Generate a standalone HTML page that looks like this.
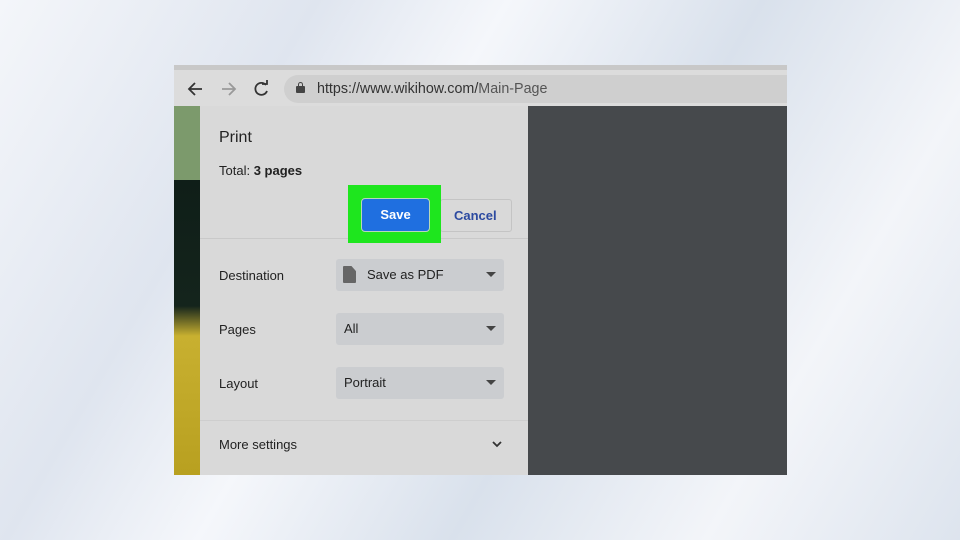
<!DOCTYPE html><html><head><style>
body{margin:0;width:960px;height:540px;overflow:hidden;font-family:"Liberation Sans",sans-serif;
background:linear-gradient(120deg,#f4f6fa 0%,#dfe5ef 25%,#f5f7fb 40%,#d9e1ec 60%,#f3f5f9 80%,#dde4ee 100%);position:relative}
.a{position:absolute}
.t{color:#222;font-size:13px}
.sel{position:absolute;left:336px;width:168px;height:32px;background:#cbcdd0;border-radius:3px}
.sel span{position:absolute;left:8px;top:8px;font-size:13px;color:#222}
.tri{position:absolute;right:8px;top:13px;width:0;height:0;border-left:5px solid transparent;border-right:5px solid transparent;border-top:5px solid #444}
</style></head><body>
<div class="a" style="left:174px;top:65px;width:613px;height:41px;background:#dcdcdc"></div>
<div class="a" style="left:174px;top:65px;width:613px;height:5px;background:#c8c8c8"></div>
<div class="a" style="left:284px;top:75px;width:503px;height:28px;background:#cfcfcf;border-radius:14px 0 0 14px"></div>
<svg class="a" style="left:186px;top:79px" width="90" height="20" viewBox="0 0 90 20" fill="none" stroke-width="1.8">
<path d="M16 10H3M9 4L3 10L9 16" stroke="#333"/>
<path d="M36 10H49M43 4L49 10L43 16" stroke="#999"/>
<path d="M80 6A6 6 0 1 0 81 12" stroke="#333"/><path d="M76 5h5v-4" stroke="#333"/>
</svg>
<div class="a" style="left:296px;top:86px;width:9px;height:7px;background:#444;border-radius:1px"></div>
<div class="a" style="left:298px;top:82px;width:3px;height:4px;border:1.5px solid #444;border-bottom:none;border-radius:3px 3px 0 0"></div>
<div class="a" style="left:317px;top:81px;font-size:14.3px;color:#333">https://www.wikihow.com/<span style="color:#555">Main-Page</span></div>
<div class="a" style="left:174px;top:106px;width:26px;height:369px;background:linear-gradient(#7c9a6c 0,#7c9a6c 74px,#0f1e18 74px,#14241c 200px,#c8b030 230px,#b8a020 369px)"></div>
<div class="a" style="left:200px;top:106px;width:328px;height:369px;background:#d9d9d9"></div>
<div class="a" style="left:528px;top:106px;width:259px;height:369px;background:#46494c"></div>
<div class="a" style="left:219px;top:129px;font-size:16px;color:#222">Print</div>
<div class="a t" style="left:219px;top:163px">Total: <b>3 pages</b></div>
<div class="a" style="left:200px;top:238px;width:328px;height:1px;background:#c9c9c9"></div>
<div class="a" style="left:200px;top:420px;width:328px;height:1px;background:#cecece"></div>
<div class="a" style="left:440px;top:199px;width:70px;height:31px;border:1px solid #c4c4c4;border-radius:3px"></div>
<div class="a" style="left:454px;top:208px;font-size:13px;font-weight:bold;color:#2c4aa0">Cancel</div>
<div class="a" style="left:348px;top:185px;width:93px;height:58px;background:#1ee61e"></div>
<div class="a" style="left:361px;top:198px;width:67px;height:32px;background:#1f6fe0;border:1px solid #b8d8b8;border-radius:4px;color:#fff;font-size:13px;font-weight:bold;text-align:center;line-height:32px">Save</div>
<div class="a t" style="left:219px;top:268px">Destination</div>
<div class="a t" style="left:219px;top:322px">Pages</div>
<div class="a t" style="left:219px;top:376px">Layout</div>
<div class="a t" style="left:219px;top:437px">More settings</div>
<svg class="a" style="left:491px;top:440px" width="12" height="8" viewBox="0 0 12 8"><path d="M2 2L6 6L10 2" stroke="#333" stroke-width="1.8" fill="none"/></svg>
<div class="sel" style="top:259px"><div class="a" style="left:7px;top:7px;width:13px;height:17px;background:#666;border-radius:1px;clip-path:polygon(0 0,65% 0,100% 30%,100% 100%,0 100%)"></div><span style="left:31px">Save as PDF</span><div class="tri"></div></div>
<div class="sel" style="top:313px"><span>All</span><div class="tri"></div></div>
<div class="sel" style="top:367px"><span>Portrait</span><div class="tri"></div></div>
</body></html>
